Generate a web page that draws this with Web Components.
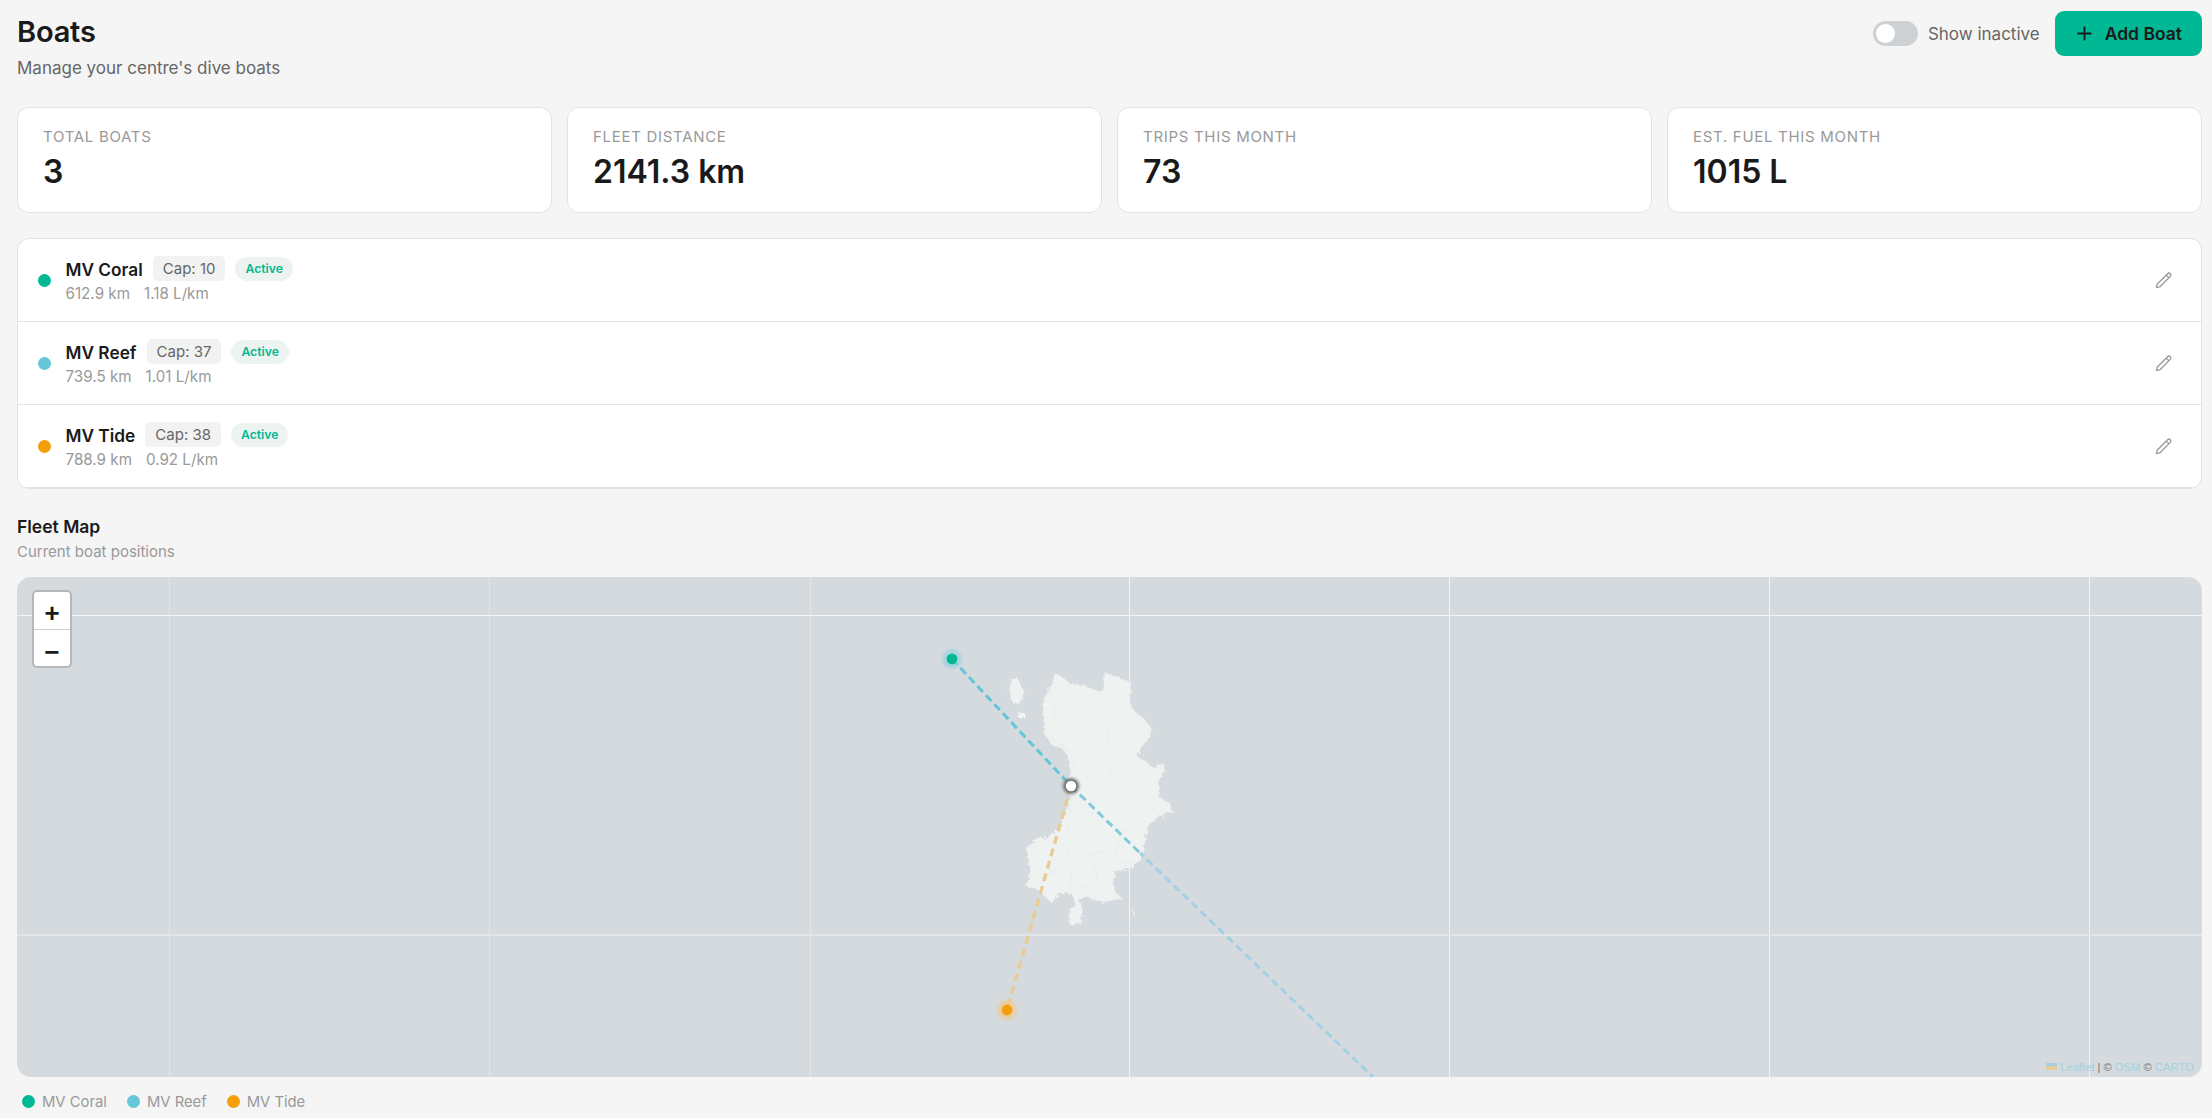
<!DOCTYPE html>
<html>
<head>
<meta charset="utf-8">
<title>Boats</title>
<style>
  html, body { margin: 0; height: 100%; overflow: hidden; }
  body { background: #f5f5f5; font-family: Inter, "Liberation Sans", sans-serif; color: #1a1a1a; }
</style>
</head>
<body>

<boats-page>
  <page-header slot="header" title="Boats" subtitle="Manage your centre's dive boats"></page-header>

  <stat-card slot="stats" label="TOTAL BOATS" value="3"></stat-card>
  <stat-card slot="stats" label="FLEET DISTANCE" value="2141.3 km"></stat-card>
  <stat-card slot="stats" label="TRIPS THIS MONTH" value="73"></stat-card>
  <stat-card slot="stats" label="EST. FUEL THIS MONTH" value="1015 L"></stat-card>

  <boat-row slot="boats" name="MV Coral" cap="10" dist="612.9 km" rate="1.18 L/km" color="#00b894"></boat-row>
  <boat-row slot="boats" name="MV Reef" cap="37" dist="739.5 km" rate="1.01 L/km" color="#66c6da"></boat-row>
  <boat-row slot="boats" name="MV Tide" cap="38" dist="788.9 km" rate="0.92 L/km" color="#f59e0b"></boat-row>

  <fleet-map slot="map"></fleet-map>

  <legend-item slot="legend" color="#00b894">MV Coral</legend-item>
  <legend-item slot="legend" color="#66c6da">MV Reef</legend-item>
  <legend-item slot="legend" color="#f59e0b">MV Tide</legend-item>
</boats-page>

<script>
class BoatsPage extends HTMLElement {
  constructor() {
    super();
    const shadow = this.attachShadow({ mode: 'open' });
    shadow.innerHTML = `
      <style>
        :host { display: block; padding: 12px 10px 0 17px; }
        .stats { display: grid; grid-template-columns: repeat(4, 1fr); gap: 15px; margin-top: 28.5px; }
        .boats { margin-top: 25px; background: #fff; border: 1px solid #e2e2e2; border-radius: 12px; overflow: hidden; }
        h2 { margin: 25.5px 0 0; font-size: 17.5px; line-height: 24px; font-weight: 600; }
        p { margin: 3px 0 0; font-size: 15px; line-height: 20px; color: #999; }
        .legend { display: flex; gap: 20px; margin: 15px 0 0 5px; }
        .map { margin-top: 15px; }
      </style>
      <slot name="header"></slot>
      <div class="stats"><slot name="stats"></slot></div>
      <div class="boats"><slot name="boats"></slot></div>
      <h2>Fleet Map</h2>
      <p>Current boat positions</p>
      <div class="map"><slot name="map"></slot></div>
      <div class="legend"><slot name="legend"></slot></div>
    `;
  }
}

class PageHeader extends HTMLElement {
  constructor() {
    super();
    const shadow = this.attachShadow({ mode: 'open' });
    shadow.innerHTML = `
      <style>
        :host { display: flex; justify-content: space-between; align-items: flex-start; height: 66px; }
        h1 { margin: 0; font-size: 29px; line-height: 40px; font-weight: 600; letter-spacing: -0.2px; }
        p { margin: 4px 0 0; font-size: 17px; line-height: 24px; color: #666; }
        .actions { display: flex; align-items: center; gap: 11px; margin-top: -1px; }
        .switch { width: 45px; height: 25px; box-sizing: border-box; border-radius: 13px; background: #cdd1d3; padding: 3px; margin-right: -1px; }
        .knob { width: 19px; height: 19px; border-radius: 50%; background: #fff; }
        .lbl { font-size: 17px; color: #666; }
        button { display: flex; align-items: center; gap: 13px; height: 45px; margin-left: 4px; padding: 0 20px 0 22px; border: 0; border-radius: 9px;
                 background: #00b894; color: #1a1a1a; font: 600 17.5px Inter, sans-serif; }
        svg { display: block; }
      </style>
      <div>
        <h1>${this.getAttribute('title')}</h1>
        <p>${this.getAttribute('subtitle')}</p>
      </div>
      <div class="actions">
        <div class="switch"><div class="knob"></div></div>
        <span class="lbl">Show inactive</span>
        <button>
          <svg width="15" height="15" viewBox="0 0 15 15" fill="none" stroke="#1a1a1a" stroke-width="1.8"><path d="M7.5 0.5v14M0.5 7.5h14"/></svg>
          <span>Add Boat</span>
        </button>
      </div>
    `;
  }
}

class StatCard extends HTMLElement {
  constructor() {
    super();
    const shadow = this.attachShadow({ mode: 'open' });
    shadow.innerHTML = `
      <style>
        :host { display: block; box-sizing: border-box; height: 106.5px; padding: 19.5px 25px; background: #fff; border: 1px solid #e2e2e2; border-radius: 12px; }
        .label { font-size: 15px; line-height: 20px; color: #999; letter-spacing: 0.7px; }
        .value { margin-top: 6px; font-size: 32px; line-height: 38px; font-weight: 600; }
      </style>
      <div class="label">${this.getAttribute('label')}</div>
      <div class="value">${this.getAttribute('value')}</div>
    `;
  }
}

class BoatRow extends HTMLElement {
  constructor() {
    super();
    const shadow = this.attachShadow({ mode: 'open' });
    shadow.innerHTML = `
      <style>
        :host { display: flex; align-items: center; box-sizing: border-box; height: 83px; padding: 0 28px 0 20px; border-bottom: 1px solid #e2e2e2; }
        :host(:first-child) { height: 84px; }
        :host(:last-child) { border-bottom: 0; height: 82px; }
        .dot { flex: none; width: 13px; height: 13px; border-radius: 50%; margin-right: 14.5px; }
        .info { flex: 1; }
        .top { display: flex; align-items: center; gap: 10px; }
        .name { font-size: 17.3px; line-height: 25px; font-weight: 600; }
        .cap { padding: 0 10px; height: 25px; line-height: 25px; font-size: 15px; color: #666; background: #f1f2f1; border-radius: 5px; margin-bottom: 2px; }
        .active { padding: 0 10px; height: 24px; line-height: 24px; font-size: 12.2px; font-weight: 600; color: #00b894; background: #edf3f0; border-radius: 12px; margin-bottom: 2px; }
        .sub { display: flex; gap: 14px; margin-top: 1px; font-size: 15.2px; line-height: 20px; color: #999; }
        svg { display: block; }
      </style>
      <span class="dot" style="background:${this.getAttribute('color')}"></span>
      <div class="info">
        <div class="top">
          <span class="name">${this.getAttribute('name')}</span>
          <span class="cap">Cap: ${this.getAttribute('cap')}</span>
          <span class="active">Active</span>
        </div>
        <div class="sub"><span>${this.getAttribute('dist')}</span><span>${this.getAttribute('rate')}</span></div>
      </div>
      <svg width="18" height="18" viewBox="0 0 18 18" fill="none" stroke="#999" stroke-width="1.3" stroke-linejoin="round">
        <path d="M1.4 16.6l0.9-3.6L12.6 2.7a1.9 1.9 0 0 1 2.7 2.7L5 15.7z"/>
        <path d="M11.2 4.1l2.7 2.7"/>
      </svg>
    `;
  }
}

class ZoomControl extends HTMLElement {
  constructor() {
    super();
    const shadow = this.attachShadow({ mode: 'open' });
    shadow.innerHTML = `
      <style>
        :host { position: absolute; left: 15px; top: 13px; width: 40px; box-sizing: border-box; border: 2px solid #b5b8ba; border-radius: 5px; background: #fff; }
        div { height: 27px; padding-top: 10px; text-align: center; font: bold 26px/27px "Liberation Mono", monospace; color: #1a1a1a; }
        div + div { height: 26px; line-height: 28px; border-top: 1px solid #ccc; }
      </style>
      <div>+</div>
      <div>&#8722;</div>
    `;
  }
}

class FleetMap extends HTMLElement {
  constructor() {
    super();
    const shadow = this.attachShadow({ mode: 'open' });
    shadow.innerHTML = `
      <style>
        :host { display: block; position: relative; height: 500px; background: #d4dadd; border-radius: 14px; overflow: hidden; }
        svg { position: absolute; left: 0; top: 0; display: block; }
        .attr { position: absolute; right: 8px; bottom: 2px; display: flex; align-items: center; gap: 3px; font: 11.3px/16px "Liberation Sans", sans-serif; color: #777; }
        .attr a { color: #a3d1e3; }
        .flag { display: inline-block; width: 11px; height: 7px; background: linear-gradient(#a3d1e3 50%, #e8cc98 50%); }
      </style>
      <svg width="2185" height="500" viewBox="17 577 2185 500">
        <defs>
          <filter id="soft" x="-50%" y="-50%" width="200%" height="200%"><feGaussianBlur stdDeviation="1.2"/></filter>
          <filter id="rough" x="-5%" y="-5%" width="110%" height="110%">
            <feTurbulence type="fractalNoise" baseFrequency="0.09" numOctaves="2" seed="4" result="n"/>
            <feDisplacementMap in="SourceGraphic" in2="n" scale="16"/>
          </filter>
        </defs>
        <g fill="none">
          <path d="M169.5 577V1077M489.5 577V1077M810.5 577V1077" stroke="#e3e6e8" stroke-width="1"/>
          <path d="M1129.5 577V1077M1449.5 577V1077M1769.5 577V1077M2089.5 577V1077" stroke="#f4f6f6" stroke-width="1"/>
          <path d="M17 615.5H2202" stroke="#f4f6f6" stroke-width="1"/>
          <path d="M17 935H2202" stroke="#e3e6e8" stroke-width="2"/>
        </g>
        <g transform="translate(920 630) scale(0.3333)">
          <g fill="#eef2f0" filter="url(#rough)">
            <path d="M405 130 425 140 450 160 490 165 525 180 545 185 555 130 590 140 630 155 635 185 625 205 640 240 670 265 695 295 690 325 665 350 650 380 680 395 700 415 730 400 735 420 718 450 715 500 750 520 758 550 735 550 700 570 680 600 675 640 660 690 630 715 585 725 580 750 585 785 610 808 580 810 550 820 500 800 475 805 490 850 480 880 450 885 445 860 465 820 455 790 420 790 395 820 370 795 340 770 318 770 330 735 325 690 320 650 350 625 390 620 410 600 430 570 450 500 440 470 450 420 445 380 425 355 395 345 375 315 372 270 370 210 395 165Z"/>
            <path d="M290 140 305 170 315 190 300 215 280 222 265 180 275 150Z"/>
            <circle cx="303" cy="255" r="10" fill="#f4f6f5"/>
            <path d="M636 838 646 852 640 858Z" fill="#f4f6f5"/>
          </g>
          <g fill="none" stroke-linejoin="round">
            <g stroke="#e6ebea" stroke-width="7">
              <path d="M375 290 395 325 430 350 455 370 465 420 470 470 455 520 445 560 440 620 445 680 460 740 445 780"/>
              <path d="M470 430 520 440 555 455 580 420 640 385"/>
              <path d="M600 620 630 590 680 570"/>
              <path d="M600 620 585 680 620 705 660 690"/>
              <path d="M325 735 370 750 410 715 450 690"/>
              <path d="M455 760 490 770 520 790 560 800"/>
            </g>
            <g stroke="#f7f9f8" stroke-width="2.5">
              <path d="M375 290 395 325 430 350 455 370 465 420 470 470 455 520 445 560 440 620 445 680 460 740 445 780"/>
              <path d="M470 430 520 440 555 455 580 420 640 385"/>
              <path d="M600 620 630 590 680 570"/>
              <path d="M600 620 585 680 620 705 660 690"/>
              <path d="M325 735 370 750 410 715 450 690"/>
              <path d="M455 760 490 770 520 790 560 800"/>
            </g>
            <g stroke="#e6ebea" stroke-width="2">
              <path d="M500 680 560 660 600 640"/>
              <path d="M475 640 520 700 540 770"/>
              <path d="M410 200 400 240 410 290"/>
              <path d="M560 300 570 350"/>
              <path d="M500 380 520 420"/>
            </g>
          </g>
        </g>
        <g fill="none" stroke-width="3">
          <path d="M952 659 1071 786" stroke="#62c5d9" stroke-dasharray="8 4.4"/>
          <path d="M1071 786 1140 853" stroke="#84c9dc" stroke-dasharray="8 4.4"/>
          <path d="M1140 853 1373 1077" stroke="#a3d1e3" stroke-dasharray="8 4.4" stroke-dashoffset="3"/>
          <path d="M1071 786 1007 1010" stroke="#e8cc98" stroke-width="3.4" stroke-dasharray="8 5"/>
        </g>
        <circle cx="952" cy="659" r="10" fill="#8fd0e0" opacity="0.6" filter="url(#soft)"/>
        <circle cx="952" cy="659" r="5.4" fill="#00b894"/>
        <circle cx="1007" cy="1010" r="10" fill="#f3c987" opacity="0.65" filter="url(#soft)"/>
        <circle cx="1007" cy="1010" r="5.4" fill="#f59e0b"/>
        <circle cx="1071" cy="786" r="8.6" fill="#777" opacity="0.75" filter="url(#soft)"/>
        <circle cx="1071" cy="786" r="6" fill="#fff" stroke="#777" stroke-width="1.6"/>
      </svg>
      <zoom-control></zoom-control>
      <div class="attr"><span class="flag"></span><a>Leaflet</a><span>| &copy;</span><a>OSM</a><span>&copy;</span><a>CARTO</a></div>
    `;
  }
}

class LegendItem extends HTMLElement {
  constructor() {
    super();
    const shadow = this.attachShadow({ mode: 'open' });
    shadow.innerHTML = `
      <style>
        :host { display: flex; align-items: center; gap: 7px; font-size: 14.8px; line-height: 20px; color: #999; }
        i { width: 13px; height: 13px; border-radius: 50%; background: ${this.getAttribute('color')}; }
      </style>
      <i></i><slot></slot>
    `;
  }
}

customElements.define('zoom-control', ZoomControl);
customElements.define('page-header', PageHeader);
customElements.define('stat-card', StatCard);
customElements.define('boat-row', BoatRow);
customElements.define('fleet-map', FleetMap);
customElements.define('legend-item', LegendItem);
customElements.define('boats-page', BoatsPage);
</script>
</body>
</html>
